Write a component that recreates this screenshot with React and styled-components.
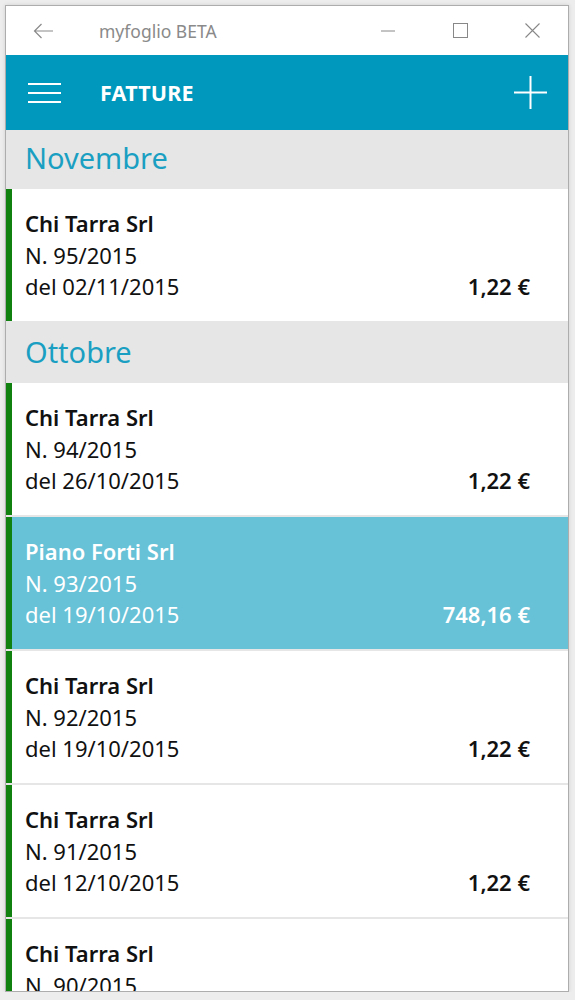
import React from "react";
import styled, { createGlobalStyle } from "styled-components";

const Global = createGlobalStyle`
  html, body { margin: 0; padding: 0; background: #ededed; }
  body { font-family: "Noto Sans", "Open Sans", sans-serif; }
  * { box-sizing: border-box; }
`;

const Window = styled.div`
  margin: 5px 0 0 5px;
  width: 564px;
  height: 987px;
  border: 1px solid #adadad;
  background: #fff;
  display: flex;
  flex-direction: column;
  overflow: hidden;
  box-shadow: 0 0 4px rgba(0,0,0,0.12);
`;

const TitleBar = styled.div`
  height: 49px;
  flex: none;
  display: flex;
  align-items: center;
  background: #fff;
  color: #808080;
`;

const TitleButton = styled.div`
  width: ${p => p.$w || 48}px;
  height: 49px;
  display: flex;
  align-items: center;
  justify-content: ${p => p.$justify || "center"};
  padding-left: ${p => p.$pl || 0}px;
  flex: none;
`;

const TitleText = styled.div`
  flex: 1;
  font-family: "Noto Sans", "Open Sans", sans-serif;
  font-size: 17.5px;
  color: #8a8a8a;
  padding-left: 41px;
`;

const AppBar = styled.div`
  height: 75px;
  flex: none;
  background: #0098bc;
  display: flex;
  align-items: center;
  color: #fff;
`;

const AppTitle = styled.div`
  flex: 1;
  font-family: "Noto Sans", "Open Sans", sans-serif;
  font-weight: 700;
  font-size: 21.5px;
  padding-left: 39px;
  letter-spacing: 0.2px;
`;

const IconBox = styled.div`
  width: ${p => p.$w}px;
  height: 75px;
  display: flex;
  align-items: center;
  justify-content: ${p => p.$justify || "center"};
  flex: none;
`;

const Viewport = styled.div`
  flex: 1;
  overflow: hidden;
`;

const List = styled.div`
  margin-top: -3px;
  display: flex;
  flex-direction: column;
`;

const SectionHeader = styled.div`
  height: 62px;
  background: #e6e6e6;
  color: #1a9fc2;
  font-family: "Noto Sans", "Open Sans", sans-serif;
  font-size: 29px;
  padding-left: 19px;
  display: flex;
  align-items: center;
  padding-bottom: 1px;
`;

const Group = styled.div`
  display: flex;
  flex-direction: column;
  gap: 2px;
  background: #e6e6e6;
`;

const Item = styled.div`
  height: 132px;
  flex: none;
  display: flex;
  background: ${p => (p.$selected ? "#67c1d7" : "#fff")};
  color: ${p => (p.$selected ? "#fff" : "#111")};
`;

const Stripe = styled.div`
  width: 6px;
  flex: none;
  background: #10800f;
`;

const ItemBody = styled.div`
  flex: 1;
  padding: 19px 38px 0 13px;
  font-family: "Noto Sans", "Open Sans", sans-serif;
  font-size: 22px;
  line-height: 31.5px;
`;

const Name = styled.div`
  font-weight: 600;
`;

const Line = styled.div`
  display: flex;
  justify-content: space-between;
`;

const Amount = styled.span`
  font-weight: 600;
`;

const groups = [
  {
    title: "Novembre",
    items: [{ name: "Chi Tarra Srl", n: "95/2015", date: "02/11/2015", amount: "1,22 €" }],
  },
  {
    title: "Ottobre",
    items: [
      { name: "Chi Tarra Srl", n: "94/2015", date: "26/10/2015", amount: "1,22 €" },
      { name: "Piano Forti Srl", n: "93/2015", date: "19/10/2015", amount: "748,16 €", selected: true },
      { name: "Chi Tarra Srl", n: "92/2015", date: "19/10/2015", amount: "1,22 €" },
      { name: "Chi Tarra Srl", n: "91/2015", date: "12/10/2015", amount: "1,22 €" },
      { name: "Chi Tarra Srl", n: "90/2015", date: "05/10/2015", amount: "1,22 €" },
    ],
  },
];

export default function App() {
  return (
    <>
      <Global />
      <Window>
        <TitleBar>
          <TitleButton $w={52} $pl={27} $justify="flex-start">
            <svg width="20" height="16" viewBox="0 0 20 16" fill="none" stroke="#8a8a8a" strokeWidth="1.2">
              <path d="M20 8H1.5M8.5 1L1.5 8l7 7" />
            </svg>
          </TitleButton>
          <TitleText>myfoglio BETA</TitleText>
          <TitleButton $w={72}>
            <svg width="14" height="2" viewBox="0 0 14 2"><path d="M0 1h14" stroke="#888" strokeWidth="1" /></svg>
          </TitleButton>
          <TitleButton $w={72}>
            <svg width="15" height="15" viewBox="0 0 15 15"><rect x="0.5" y="0.5" width="14" height="14" fill="none" stroke="#888" strokeWidth="1" /></svg>
          </TitleButton>
          <TitleButton $w={72}>
            <svg width="15" height="15" viewBox="0 0 15 15"><path d="M0.5 0.5l14 14M14.5 0.5l-14 14" stroke="#888" strokeWidth="1.1" /></svg>
          </TitleButton>
        </TitleBar>
        <AppBar>
          <IconBox $w={55} $justify="flex-end">
            <svg width="33" height="20" viewBox="0 0 33 20" stroke="#fff" strokeWidth="2">
              <path d="M0 1h33M0 10h33M0 19h33" />
            </svg>
          </IconBox>
          <AppTitle>FATTURE</AppTitle>
          <IconBox $w={75}>
            <svg width="33" height="33" viewBox="0 0 33 33" stroke="#fff" strokeWidth="2">
              <path d="M16.5 0v33M0 16.5h33" />
            </svg>
          </IconBox>
        </AppBar>
        <Viewport>
          <List>
            {groups.map(g => (
              <React.Fragment key={g.title}>
                <SectionHeader>{g.title}</SectionHeader>
                <Group>
                  {g.items.map(it => (
                    <Item key={it.n} $selected={it.selected}>
                      <Stripe />
                      <ItemBody>
                        <Name>{it.name}</Name>
                        <div>N. {it.n}</div>
                        <Line>
                          <span>del {it.date}</span>
                          <Amount>{it.amount}</Amount>
                        </Line>
                      </ItemBody>
                    </Item>
                  ))}
                </Group>
              </React.Fragment>
            ))}
          </List>
        </Viewport>
      </Window>
    </>
  );
}
